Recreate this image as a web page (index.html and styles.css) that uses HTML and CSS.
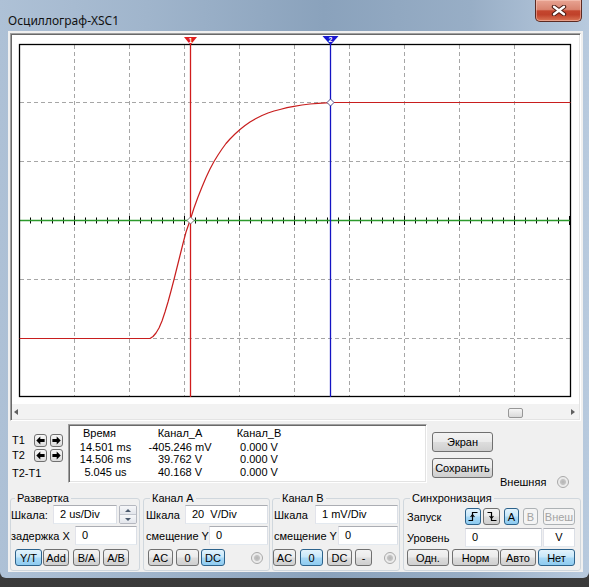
FILE: index.html
```html
<!DOCTYPE html>
<html>
<head>
<meta charset="utf-8">
<title>Осциллограф-XSC1</title>
<link rel="stylesheet" href="styles.css">
</head>
<body>
<div class="window">
  <div class="titlebar">
    <span class="title">Осциллограф-XSC1</span>
    <div class="close">
      <svg width="16" height="11" viewBox="0 0 16 11">
        <path d="M3 1.8 L13 9.2 M13 1.8 L3 9.2" stroke="#4a1c14" stroke-width="4.4" stroke-linecap="round"/>
        <path d="M3 1.8 L13 9.2 M13 1.8 L3 9.2" stroke="#ffffff" stroke-width="2.4" stroke-linecap="round"/>
      </svg>
    </div>
  </div>

  <div class="client">
    <div class="scope">
      <svg class="plot" width="567" height="369" viewBox="12 35 567 369">
        <g stroke="#a6a6a6" stroke-width="1" stroke-dasharray="4 3" fill="none">
          <path d="M74.5 45V397M129.5 45V397M184.5 45V397M239.5 45V397M294.5 45V397M349.5 45V397M404.5 45V397M459.5 45V397M514.5 45V397"/>
          <path d="M20 102.5H570M20 161.5H570M20 220.5H570M20 279.5H570M20 338.5H570"/>
        </g>
        <line x1="19" y1="220.5" x2="571" y2="220.5" stroke="#000" stroke-width="6" stroke-dasharray="1 10"/>
        <line x1="19" y1="220.5" x2="571" y2="220.5" stroke="#000" stroke-width="9" stroke-dasharray="1 54"/>
        <line x1="19.5" y1="220.5" x2="570.5" y2="220.5" stroke="#2c9a2c" stroke-width="1.6"/>
        <rect x="19.5" y="44.5" width="551" height="352" fill="none" stroke="#000" stroke-width="1.3"/>
        <polyline fill="none" stroke="#c81e1e" stroke-width="1.2" stroke-linejoin="round"
          points="19.5,338.5 150,338.5 153,336.5 156,333 159,328 162,321 165,312 168,302 171,291 174,279.5 177,267.5 180,255.5 183,243.5 186,232 190,220.5 194,208 198,197 202,187 206,177.5 210,169 214,161.5 218,155 222,149 226,143.5 230,139 235,134 240,129.5 245,125.5 250,122 256,118.5 262,115.5 268,113 274,111 280,109.5 287,107.7 294,106.3 302,105 310,104 318,103.3 326,102.8 334,102.5 570.5,102.5"/>
        <line x1="190.5" y1="44" x2="190.5" y2="397" stroke="#d01c1c" stroke-width="1.3"/>
        <line x1="330.5" y1="44" x2="330.5" y2="397" stroke="#1414c4" stroke-width="1.3"/>
        <polygon points="184,37 197,37 190.5,45" fill="#e01e1e"/>
        <text x="190.5" y="42.6" font-size="6.5" font-weight="bold" fill="#fff" text-anchor="middle" font-family="Liberation Sans, sans-serif">1</text>
        <polygon points="322.5,36 338.5,36 330.5,45" fill="#1818d0"/>
        <text x="330.5" y="42" font-size="7" font-weight="bold" fill="#fff" text-anchor="middle" font-family="Liberation Sans, sans-serif">2</text>
        <path d="M190.5 217 L194 220.5 L190.5 224 L187 220.5 Z" fill="#fff" stroke="#707070" stroke-width="0.9"/>
        <path d="M330.5 99 L334 102.5 L330.5 106 L327 102.5 Z" fill="#fff" stroke="#404080" stroke-width="0.9"/>
      </svg>
      <div class="hscroll">
        <span class="arr-l"></span>
        <span class="grow"></span>
        <span class="thumb"></span>
        <span class="arr-r"></span>
      </div>
    </div>

    <div class="meas">
      <div class="tcol">
        <div class="trow">
          <span class="tl">T1</span>
          <span class="ab"><svg width="9" height="9" viewBox="0 0 9 9"><path d="M0.3 4.5 L4.3 0.5 V3 H8.6 V6 H4.3 V8.5 Z" fill="#000"/></svg></span>
          <span class="ab"><svg width="9" height="9" viewBox="0 0 9 9"><path d="M8.7 4.5 L4.7 0.5 V3 H0.4 V6 H4.7 V8.5 Z" fill="#000"/></svg></span>
        </div>
        <div class="trow">
          <span class="tl">T2</span>
          <span class="ab"><svg width="9" height="9" viewBox="0 0 9 9"><path d="M0.3 4.5 L4.3 0.5 V3 H8.6 V6 H4.3 V8.5 Z" fill="#000"/></svg></span>
          <span class="ab"><svg width="9" height="9" viewBox="0 0 9 9"><path d="M8.7 4.5 L4.7 0.5 V3 H0.4 V6 H4.7 V8.5 Z" fill="#000"/></svg></span>
        </div>
        <div class="trow trow3"><span class="tl wide">T2-T1</span></div>
      </div>

      <div class="table">
        <span class="c hdr1">Время</span><span class="c">Канал_А</span><span class="c">Канал_В</span>
        <span class="c">14.501 ms</span><span class="c">-405.246 mV</span><span class="c">0.000 V</span>
        <span class="c">14.506 ms</span><span class="c">39.762 V</span><span class="c">0.000 V</span>
        <span class="c">5.045 us</span><span class="c">40.168 V</span><span class="c">0.000 V</span>
      </div>

      <div class="rcol">
        <div class="btn b-screen">Экран</div>
        <div class="rrow">
          <div class="btn b-save">Сохранить</div>
          <div class="ext"><span>Внешняя</span><span class="radio"></span></div>
        </div>
      </div>
    </div>

    <div class="groups">
      <fieldset class="grp g1">
        <legend>Развертка</legend>
        <div class="row">
          <span class="lab w42">Шкала:</span>
          <span class="inp w64">2 us/Div</span>
          <span class="spin"><span class="sp"><span class="tri-up"></span></span><span class="sp"><span class="tri-dn"></span></span></span>
        </div>
        <div class="row row2">
          <span class="lab w64">задержка X</span>
          <span class="inp w62">0</span>
        </div>
        <div class="row row3">
          <span class="btn on w27 ml4">Y/T</span>
          <span class="btn w26 ml1">Add</span>
          <span class="btn w27 ml4">B/A</span>
          <span class="btn w26 ml3">A/B</span>
        </div>
      </fieldset>

      <fieldset class="grp g2">
        <legend>Канал А</legend>
        <div class="row">
          <span class="lab w41 pl2">Шкала</span>
          <span class="inp w83">20&nbsp; V/Div</span>
        </div>
        <div class="row row2">
          <span class="lab w65 pl2">смещение Y</span>
          <span class="inp w59">0</span>
        </div>
        <div class="row row3">
          <span class="btn w25 ml4">AC</span>
          <span class="btn w23 ml3">0</span>
          <span class="btn on w24 ml2">DC</span>
          <span class="radio ml26"></span>
        </div>
      </fieldset>

      <fieldset class="grp g3">
        <legend>Канал В</legend>
        <div class="row">
          <span class="lab w42 pl1">Шкала</span>
          <span class="inp w83">1 mV/Div</span>
        </div>
        <div class="row row2">
          <span class="lab w65 pl1">смещение Y</span>
          <span class="inp w60">0</span>
        </div>
        <div class="row row3">
          <span class="btn w23">AC</span>
          <span class="btn on w23 ml4">0</span>
          <span class="btn w25 ml4">DC</span>
          <span class="btn w17 ml3">-</span>
          <span class="radio ml12"></span>
        </div>
      </fieldset>

      <fieldset class="grp g4">
        <legend>Синхронизация</legend>
        <div class="row row1s">
          <span class="lab w61 pl3">Запуск</span>
          <span class="btn on w16"><svg width="10" height="11" viewBox="0 0 10 11"><path d="M0.5 9.5H4.5V1.5H9.5" fill="none" stroke="#000" stroke-width="1.2"/><path d="M2.6 6L4.5 3.6L6.4 6" fill="none" stroke="#000" stroke-width="1.1"/></svg></span>
          <span class="btn w17 ml2"><svg width="10" height="11" viewBox="0 0 10 11"><path d="M0.5 1.5H4.5V9.5H9.5" fill="none" stroke="#000" stroke-width="1.2"/><path d="M2.6 5L4.5 7.4L6.4 5" fill="none" stroke="#000" stroke-width="1.1"/></svg></span>
          <span class="btn on w15 ml4">A</span>
          <span class="btn dis w15 ml4">B</span>
          <span class="btn dis w32 ml5">Внеш</span>
        </div>
        <div class="row row2s">
          <span class="lab w61 pl3">Уровень</span>
          <span class="inp w77">0</span>
          <span class="inp w32 ml1 ctr">V</span>
        </div>
        <div class="row row3s">
          <span class="btn w42 ml3">Одн.</span>
          <span class="btn w47 ml3">Норм</span>
          <span class="btn w36 ml1">Авто</span>
          <span class="btn on w37 ml2">Нет</span>
        </div>
      </fieldset>
    </div>
  </div>
</div>
</body>
</html>
```

FILE: styles.css
```css
* { box-sizing: border-box; }
html, body { margin: 0; background: #464646; }
body {
  font-family: "Liberation Sans", Arial, sans-serif;
  font-size: 11px;
  color: #000;
  width: 589px;
  height: 587px;
  overflow: hidden;
  background: linear-gradient(#5c5c5c, #3a3a3a);
}
.window {
  width: 589px;
  height: 578px;
  border-radius: 0 0 6px 6px;
  overflow: hidden;
  background: linear-gradient(90deg, #aec1d6 0%, #a0b5cc 25%, #8aa2bc 55%, #98aec6 80%, #b8cade 100%);
}
.titlebar {
  height: 31px;
  display: flex;
  justify-content: space-between;
  align-items: flex-start;
}
.title {
  margin: 13px 0 0 8px;
  font-family: "Noto Sans", "Open Sans", sans-serif;
  font-size: 12px;
  line-height: 16px;
  color: #111;
}
.close {
  width: 47px;
  height: 22px;
  margin-right: 7px;
  border: 1px solid #5b2a22;
  border-top: none;
  border-radius: 0 0 5px 5px;
  background: linear-gradient(#e8a493 0%, #d98470 45%, #c4462e 52%, #c0412a 70%, #da7656 100%);
  box-shadow: inset 0 0 0 1px rgba(255, 215, 205, 0.45);
  display: flex;
  align-items: center;
  justify-content: center;
}
.client {
  width: 575px;
  height: 541px;
  margin-left: 8px;
  background: #f0f0f0;
  overflow: hidden;
}
.scope {
  margin: 2px 2px 0;
  border: 1px solid;
  border-color: #a0a0a0 #ffffff #ffffff #a0a0a0;
  box-shadow: inset 1px 1px 0 #696969, inset -1px -1px 0 #e3e3e3;
  padding: 1px;
}
.plot { display: block; background: #fff; }
.hscroll {
  height: 15px;
  display: flex;
  align-items: center;
  padding: 0 4px 0 2px;
  background: #f2f2f2;
}
.grow { flex: 1; }
.arr-l {
  width: 0; height: 0;
  border-top: 3px solid transparent;
  border-bottom: 3px solid transparent;
  border-right: 4px solid #606060;
}
.arr-r {
  width: 0; height: 0;
  border-top: 3px solid transparent;
  border-bottom: 3px solid transparent;
  border-left: 4px solid #606060;
}
.thumb {
  width: 15px;
  height: 10px;
  margin-right: 48px;
  margin-top: 2px;
  border: 1px solid #979797;
  border-radius: 2px;
  background: linear-gradient(#f6f6f6, #dadada);
}

/* measurement row */
.meas { display: flex; height: 68px; margin-top: 2px; }
.tcol { width: 60px; padding: 10px 0 0 4px; flex: none; }
.trow { display: flex; align-items: center; height: 14px; }
.trow + .trow { margin-top: 1px; }
.trow3 { margin-top: 4px !important; }
.tl { width: 22px; line-height: 12px; white-space: nowrap; flex: none; }
.tl.wide { width: auto; }
.ab {
  width: 13px; height: 13px;
  border: 1px solid #707070;
  border-radius: 3px;
  background: linear-gradient(#f6f6f6, #dcdcdc);
  display: flex; align-items: center; justify-content: center;
}
.ab + .ab { margin-left: 3px; }
.table {
  width: 359px;
  height: 59px;
  margin-top: 1px;
  border: 1px solid;
  border-color: #a0a0a0 #ffffff #ffffff #a0a0a0;
  box-shadow: inset 1px 1px 0 #696969, inset -1px -1px 0 #e3e3e3;
  padding: 1px;
  background: #fff;
  display: grid;
  grid-template-columns: 71px 78px 80px;
  grid-template-rows: 14px 13px 11px 16px;
  align-items: center;
  justify-items: center;
  flex: none;
}
.c { line-height: 12px; white-space: nowrap; }
.hdr1 { padding-right: 12px; }
.rcol { margin-left: 5px; padding-top: 9px; }
.rrow { display: flex; margin-top: 6px; }
.ext { display: flex; align-items: center; height: 16px; margin: 16px 0 0 7px; }

/* buttons */
.btn {
  height: 17px;
  border: 1px solid #707070;
  border-radius: 3px;
  background: linear-gradient(#f3f3f3 0%, #ebebeb 48%, #dddddd 52%, #cfcfcf 100%);
  display: flex;
  align-items: center;
  justify-content: center;
  white-space: nowrap;
  flex: none;
}
.b-screen { width: 61px; height: 20px; }
.b-save { width: 61px; height: 20px; }
.btn.on {
  border-color: #2c628b;
  background: linear-gradient(#e3f3fc 0%, #c6e7fa 48%, #a9d9f6 52%, #8ecbf0 100%);
}
.btn.dis {
  color: #a3a3a3;
  border-color: #adb2b5;
  background: #f4f4f4;
}
.radio {
  width: 12px; height: 12px;
  margin-left: 11px;
  border-radius: 50%;
  border: 1px solid #a8a8a8;
  background: radial-gradient(circle, #b4b4b4 0, #c4c4c4 2.6px, #e8e8e8 3.4px, #f8f8f8 100%);
  flex: none;
}

/* groups */
.groups { display: flex; padding-left: 2px; height: 80px; }
.grp {
  margin: 0;
  padding: 0;
  height: 80px;
  min-width: 0;
  border: 1px solid #d0d7dd;
  border-radius: 3px;
}
.grp legend { padding: 0 2px; font-size: 11px; line-height: 14px; }
.g1 { width: 130px; }
.g1 legend { margin-left: 4px; }
.g2 { width: 127px; margin-left: 3px; }
.g2 legend { margin-left: 6px; }
.g3 { width: 128px; margin-left: 2px; }
.g3 legend { margin-left: 7px; }
.g4 { width: 178px; margin-left: 3px; }
.g4 legend { margin-left: 6px; }

.row { display: flex; align-items: center; height: 19px; }
.row2 { margin-top: 2px; }
.row3 { margin-top: 4px; height: 17px; }
.row1s { margin-top: 3px; height: 17px; }
.row2s { margin-top: 3px; }
.row3s { margin-top: 2px; height: 17px; }

.lab { white-space: nowrap; flex: none; }
.inp {
  height: 19px;
  border: 1px solid;
  border-color: #abadb3 #dbdfe6 #e3e9ef #e2e3ea;
  background: #fff;
  padding-left: 6px;
  line-height: 17px;
  white-space: nowrap;
  flex: none;
}
.inp.ctr { padding-left: 0; text-align: center; }

.spin {
  width: 18px; height: 19px;
  margin-left: 2px;
  display: flex;
  flex-direction: column;
  border: 1px solid #b5b8c0;
  border-radius: 2px;
  overflow: hidden;
}
.sp {
  flex: 1;
  display: flex; align-items: center; justify-content: center;
  background: linear-gradient(#f6f7f9, #e3e6ec);
}
.sp + .sp { border-top: 1px solid #c3c7cf; }
.tri-up { width: 0; height: 0; border-left: 3px solid transparent; border-right: 3px solid transparent; border-bottom: 3px solid #4b5a6e; }
.tri-dn { width: 0; height: 0; border-left: 3px solid transparent; border-right: 3px solid transparent; border-top: 3px solid #4b5a6e; }

/* sizes */
.w15 { width: 15px; } .w16 { width: 16px; } .w17 { width: 17px; }
.w23 { width: 23px; } .w24 { width: 24px; } .w25 { width: 25px; }
.w26 { width: 26px; } .w27 { width: 27px; } .w32 { width: 32px; }
.w36 { width: 36px; } .w37 { width: 37px; } .w41 { width: 41px; }
.w42 { width: 42px; } .w47 { width: 47px; } .w59 { width: 59px; }
.w60 { width: 60px; } .w61 { width: 61px; } .w62 { width: 62px; }
.w64 { width: 64px; } .w65 { width: 65px; } .w77 { width: 77px; }
.w83 { width: 83px; }
.ml1 { margin-left: 1px; } .ml2 { margin-left: 2px; } .ml3 { margin-left: 3px; }
.ml4 { margin-left: 4px; } .ml5 { margin-left: 5px; } .ml12 { margin-left: 12px; }
.ml26 { margin-left: 26px; }
.pl1 { padding-left: 1px; } .pl2 { padding-left: 2px; } .pl3 { padding-left: 3px; }
```
